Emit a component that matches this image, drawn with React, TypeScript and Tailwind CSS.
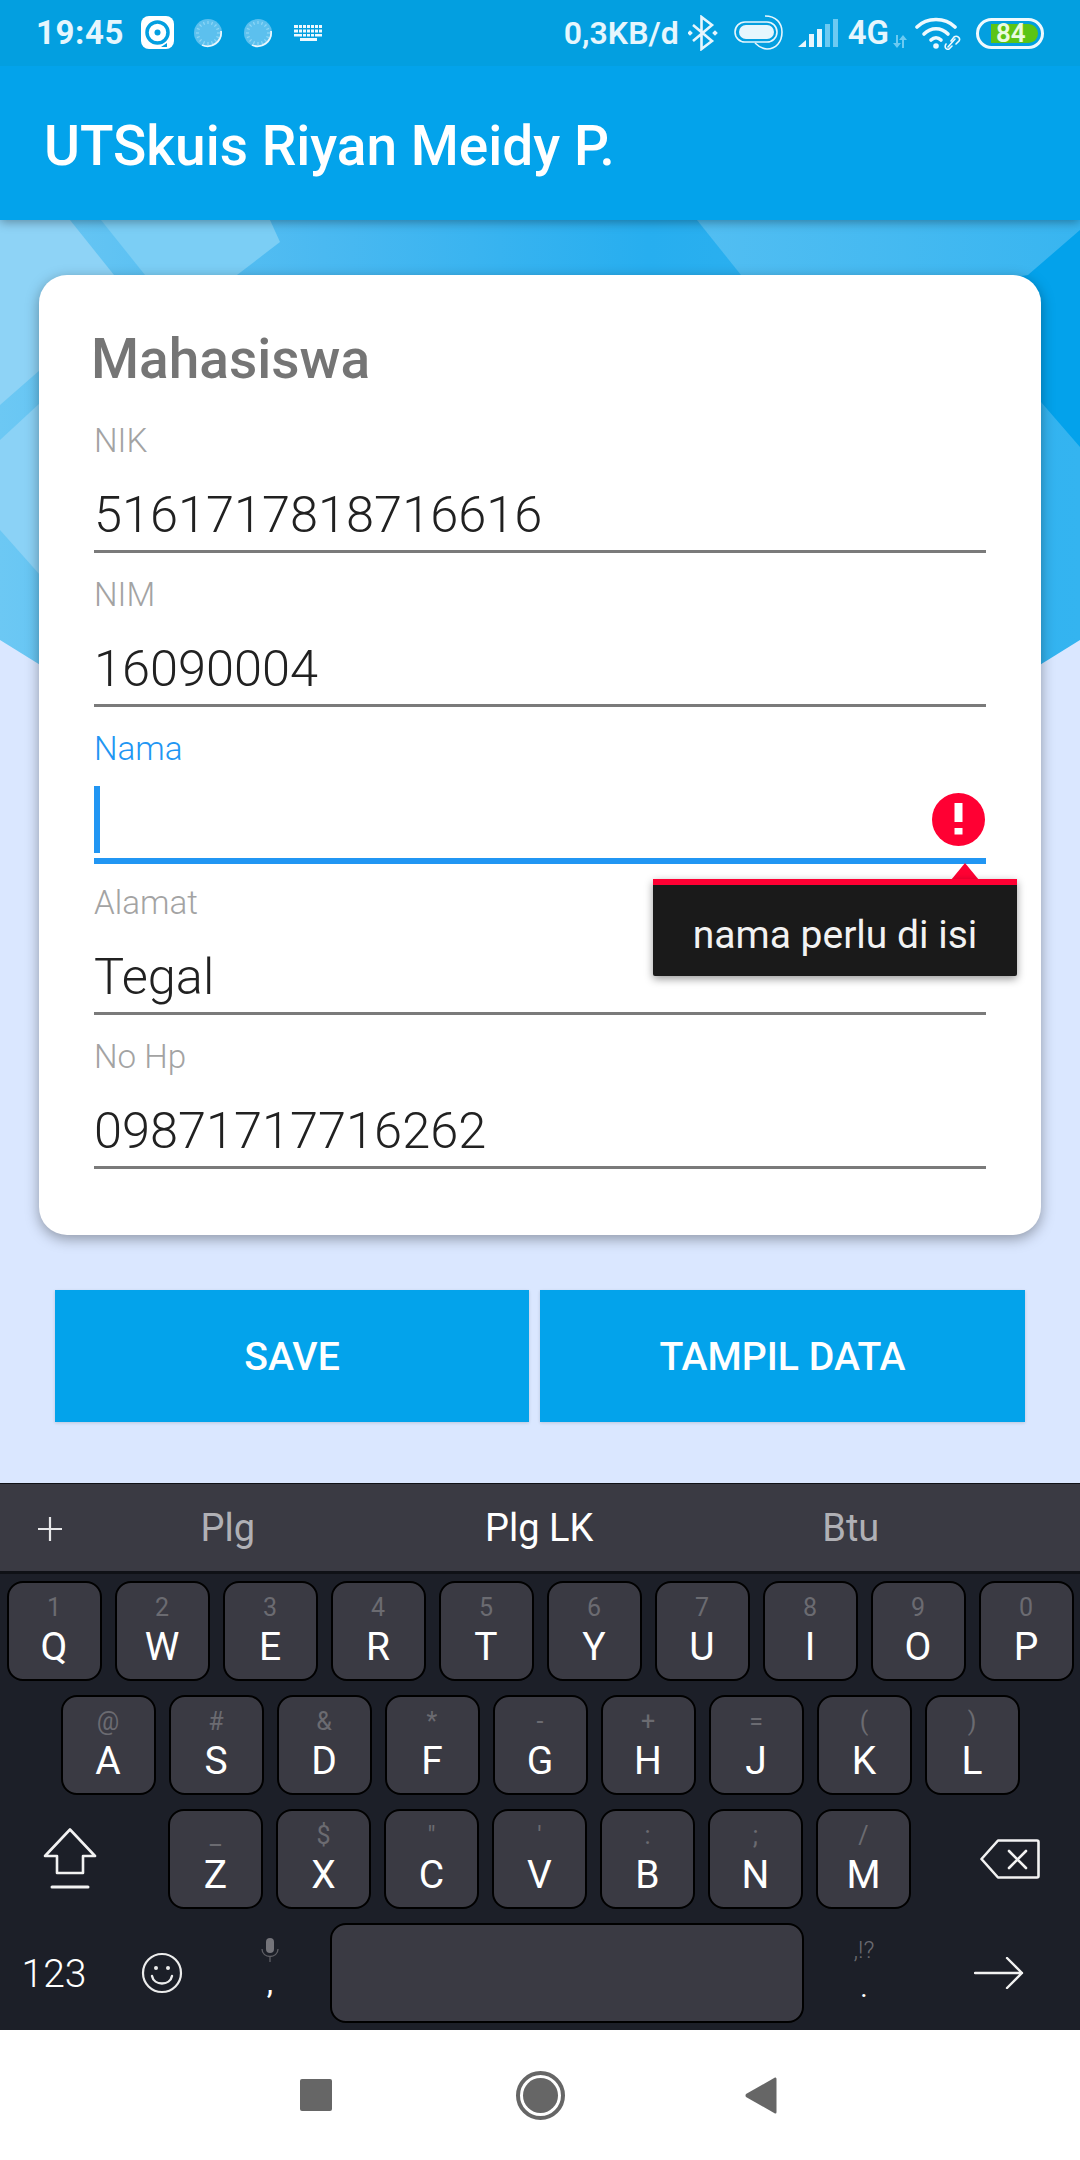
import React from "react";

const rowA = [["Q","1"],["W","2"],["E","3"],["R","4"],["T","5"],["Y","6"],["U","7"],["I","8"],["O","9"],["P","0"]];
const rowB = [["A","@"],["S","#"],["D","&"],["F","*"],["G","-"],["H","+"],["J","="],["K","("],["L",")"]];
const rowC = [["Z","_"],["X","$"],["C","\""],["V","'"],["B",":"],["N",";"],["M","/"]];

function Key({ l, h }: { l: string; h: string }) {
  return (
    <div className="w-[95px] h-[100px] box-border rounded-[16px] border-2 border-[#000000] bg-[#3a3a43] flex flex-col items-center pt-[10px]">
      <div className="h-[30px] leading-[30px] text-[25px] text-[#6b6b71]">{h}</div>
      <div className="mt-[4px] h-[40px] leading-[40px] text-[39px] text-white">{l}</div>
    </div>
  );
}

function Field({ label, value }: { label: string; value: string }) {
  return (
    <div className="h-[154px]">
      <div className="pt-[21px] pb-[21px] text-[33.2px] leading-[42px] font-light text-[#a3a3a3]">{label}</div>
      <div className="h-[67px] text-[50.5px] leading-[63px] font-light text-[#212121]">{value}</div>
      <div className="h-[3px] bg-[#7a7a7a]" />
    </div>
  );
}

function Ring({ id }: { id: string }) {
  const ticks = Array.from({ length: 16 }, (_, i) => i * 22.5);
  return (
    <svg width="30" height="30" viewBox="0 0 30 30" aria-label={id}>
      <circle cx="15" cy="15" r="14" fill="#5cc0ee" />
      {ticks.map((a) => (
        <line key={a} x1="15" y1="3" x2="15" y2="6" stroke="#8fd6f5" strokeWidth="1.2" transform={`rotate(${a} 15 15)`} />
      ))}
      <path d="M28 13 A13.5 13.5 0 0 1 9 27" fill="none" stroke="#eaf7fd" strokeWidth="1.8" />
    </svg>
  );
}

export default function App() {
  return (
    <div className="w-[1080px] h-[2160px] overflow-hidden flex flex-col bg-white font-['Roboto',sans-serif]">
      {/* status bar */}
      <div className="h-[66px] shrink-0 bg-[#039fe0] flex items-center justify-between pl-[36px] pr-[36px] text-[#e6f6fd] relative z-20">
        <div className="flex items-center">
          <span className="text-[33px] font-bold tracking-[0.6px] leading-[40px] w-[87px]">19:45</span>
          <svg className="ml-[18px]" width="33" height="34" viewBox="0 0 33 34">
            <rect x="0" y="0" width="33" height="33" rx="8" fill="#ffffff" />
            <circle cx="16.5" cy="16.5" r="10.5" fill="#ffffff" stroke="#039fe0" strokeWidth="3.5" />
            <circle cx="16.5" cy="16.5" r="3" fill="#039fe0" />
            <path d="M20 31 L26 27 L26 31 Z" fill="#039fe0" />
          </svg>
          <div className="ml-[19px] flex"><Ring id="a" /></div>
          <div className="ml-[20px] flex"><Ring id="b" /></div>
          <svg className="ml-[21px]" width="29" height="16" viewBox="0 0 29 16" fill="#eef9fe">
            <rect x="0" y="0" width="28" height="3" />
            <rect x="0" y="4.5" width="28" height="3" />
            <rect x="0" y="9" width="28" height="2.5" />
            <rect x="6" y="13" width="17" height="3" />
            <path d="M4 0h1v8H4zM8 0h1v12H8zM12 0h1v12h-1zM16 0h1v12h-1zM20 0h1v12h-1zM24 0h1v8h-1z" fill="#039fe0" />
          </svg>
        </div>
        <div className="flex items-center">
          <span className="text-[32px] font-semibold leading-[40px]">0,3KB/d</span>
          <svg className="ml-[9px]" width="30" height="36" viewBox="0 0 30 36" fill="none" stroke="#e6f6fd" strokeWidth="2.6">
            <path d="M5 10 L24 26 L13.5 34 V2 L24 10 L5 26" />
            <rect x="0" y="16" width="4" height="4" transform="rotate(45 2 18)" fill="#e6f6fd" stroke="none" />
            <rect x="25" y="16" width="4" height="4" transform="rotate(45 27 18)" fill="#e6f6fd" stroke="none" />
          </svg>
          <svg className="ml-[16px]" width="50" height="36" viewBox="0 0 50 36" fill="none">
            <rect x="1" y="7" width="42" height="20" rx="10" stroke="#e6f6fd" strokeWidth="1.6" />
            <rect x="5" y="10" width="35" height="14" rx="7" fill="#e6f6fd" />
            <path d="M31 1 C 42 1 48 8 48 17 C 48 27 42 34 33 34 C 28 34 24 31 21 28" stroke="#e6f6fd" strokeWidth="1.6" />
          </svg>
          <svg className="ml-[14px]" width="41" height="30" viewBox="0 0 41 30">
            <path d="M0 29 L8 22 V29 Z" fill="#e6f6fd" />
            <rect x="11" y="16" width="5" height="13" fill="#e6f6fd" />
            <rect x="19" y="11" width="5" height="18" fill="#e6f6fd" />
            <rect x="27" y="6" width="5" height="23" fill="#6ccaf2" />
            <rect x="35" y="1" width="5" height="28" fill="#6ccaf2" />
          </svg>
          <span className="ml-[9px] text-[33px] font-semibold leading-[40px]">4G</span>
          <svg className="ml-[4px] mt-[18px]" width="14" height="14" viewBox="0 0 14 14" fill="#6ccaf2">
            <path d="M3 0h2v8h3l-4 5-4-5h3zM9 13h2V5h3l-4-5-4 5h3z" />
          </svg>
          <svg className="ml-[8px]" width="47" height="34" viewBox="0 0 47 34" fill="none" stroke="#eef9fe" strokeLinecap="round">
            <path d="M2 11 C 12 1 30 1 40 11" strokeWidth="3.6" />
            <path d="M9 18 C 16 11 26 11 33 18" strokeWidth="3.6" />
            <path d="M16 24 C 19 21 23 21 26 24" strokeWidth="3.6" />
            <circle cx="21" cy="30" r="2.8" fill="#eef9fe" stroke="none" />
            <path d="M33 31 L40 23 M31 28 C 29 31 31 34 34 33 L37 30 M36 25 L39 21 C 42 19 46 22 44 25 L41 28" strokeWidth="1.6" />
          </svg>
          <div className="ml-[14px] w-[68px] h-[31px] box-border rounded-full border-[3px] border-[#eef9fe] flex items-center pl-[12px]">
            <div className="w-[47px] h-[19px] rounded-r-full bg-[#5cc414] text-[#eafbe0] text-[26px] font-semibold leading-[19px] pl-[5px]">84</div>
          </div>
        </div>
      </div>

      {/* app bar */}
      <div className="h-[154px] shrink-0 bg-[#03a3eb] flex items-center pl-[44px] pt-[5px] relative z-10 shadow-[0_2px_10px_rgba(0,0,0,0.35)]">
        <span className="text-[55px] font-medium text-white leading-[64px]">UTSkuis Riyan Meidy P.</span>
      </div>

      {/* content */}
      <div className="flex-1 relative bg-[#dae7ff]">
        <svg className="absolute left-0 top-0" width="1080" height="760" viewBox="0 0 1080 760">
          <defs>
            <linearGradient id="base" x1="0" y1="0" x2="1" y2="0">
              <stop offset="0" stopColor="#6cc8f4" />
              <stop offset="0.3" stopColor="#4ab9f1" />
              <stop offset="0.6" stopColor="#27aeef" />
              <stop offset="1" stopColor="#34b4f0" />
            </linearGradient>
            <linearGradient id="rlight" x1="0" y1="0" x2="1" y2="0">
              <stop offset="0" stopColor="#52bef2" />
              <stop offset="1" stopColor="#38b5f0" />
            </linearGradient>
          </defs>
          <polygon points="0,0 1080,0 1080,420 540,755 0,420" fill="url(#base)" />
          <polygon points="0,0 70,0 114,55 40,150 0,185" fill="#8ed3f6" />
          <polygon points="0,220 40,183 40,355 0,310" fill="#8bd2f6" />
          <polygon points="101,0 270,0 280,22 237,55 145,55" fill="#7bcef5" />
          <polygon points="697,0 1080,0 1080,10 1028,55 741,55" fill="url(#rlight)" />
          <polygon points="1080,10 1028,55 1000,60 1041,182 1080,227" fill="#03a2eb" />
        </svg>

        <div className="relative ml-[39px] mt-[55px] w-[1002px] h-[960px] bg-white rounded-[28px] shadow-[0_4px_14px_rgba(0,0,0,0.35)] pl-[55px] pr-[55px]">
          <div className="h-[124px] pt-[54px] text-[55px] leading-[60px] font-medium text-[#757575] -ml-[3px]">Mahasiswa</div>
          <Field label="NIK" value="5161717818716616" />
          <Field label="NIM" value="16090004" />
          <div className="h-[154px] relative">
            <div className="pt-[21px] pb-[21px] text-[33.2px] leading-[42px] font-light text-[#2196f3]">Nama</div>
            <div className="h-[67px] flex justify-between items-start">
              <div className="-mt-[5px] w-[6px] h-[67px] bg-[#2196f3]" />
              <svg className="mt-[2px] mr-[1px]" width="53" height="53" viewBox="0 0 53 53">
                <circle cx="26.5" cy="26.5" r="26.5" fill="#ff0033" />
                <rect x="22.5" y="10" width="8" height="19" fill="#ffffff" />
                <rect x="22.5" y="35" width="8" height="6.5" fill="#ffffff" />
              </svg>
            </div>
            <div className="h-[6px] bg-[#2196f3]" />
            <svg className="absolute left-[857px] top-[156px]" width="28" height="17" viewBox="0 0 28 17">
              <polygon points="14,0 28,17 0,17" fill="#ff0033" />
            </svg>
            <div className="absolute left-[559px] top-[172px] w-[364px] h-[97px] box-border border-t-[6px] border-[#ff0033] bg-[#1a1a1a] rounded-b-[2px] shadow-[0_3px_8px_rgba(0,0,0,0.4)] flex items-center justify-center pt-[8px] text-[39px] leading-[50px] text-[#f2f2f2]">
              nama perlu di isi
            </div>
          </div>
          <Field label="Alamat" value="Tegal" />
          <Field label="No Hp" value="09871717716262" />
        </div>

        <div className="relative mt-[55px] pl-[55px] flex gap-[11px]">
          <div className="w-[474px] h-[132px] pt-[2px] bg-[#03a3eb] shadow-[0_1px_3px_rgba(0,0,0,0.15)] flex items-center justify-center text-[39.2px] font-medium text-white">SAVE</div>
          <div className="w-[485px] h-[132px] pt-[2px] bg-[#03a3eb] shadow-[0_1px_3px_rgba(0,0,0,0.15)] flex items-center justify-center text-[39.2px] font-medium text-white">TAMPIL DATA</div>
        </div>
      </div>

      {/* keyboard */}
      <div className="h-[547px] shrink-0 bg-[#1c1f28] flex flex-col">
        <div className="h-[91px] box-border border-t-[1px] border-b-[3px] border-t-[#101116] border-b-[#0f1116] bg-[#3a3a43] flex items-center pt-[2px] text-[38px]">
          <div className="w-[72px] pl-[28px] flex justify-center">
            <svg width="24" height="24" viewBox="0 0 24 24" stroke="#e8e8ea" strokeWidth="2.2"><path d="M12 0V24M0 12H24" /></svg>
          </div>
          <div className="w-[311.5px] text-center text-[#b0b0b5]">Plg</div>
          <div className="w-[311.5px] text-center text-white">Plg LK</div>
          <div className="w-[311.5px] text-center text-[#b0b0b5]">Btu</div>
        </div>
        <div className="pt-[7px] flex flex-col gap-[14px]">
          <div className="flex justify-center gap-[13px]">
            {rowA.map(([l, h]) => <Key key={l} l={l} h={h} />)}
          </div>
          <div className="flex justify-center gap-[13px]">
            {rowB.map(([l, h]) => <Key key={l} l={l} h={h} />)}
          </div>
          <div className="flex items-center">
            <div className="w-[140px] flex justify-center">
              <svg width="54" height="62" viewBox="0 0 54 62" fill="none" stroke="#f2f2f2" strokeWidth="2.6" strokeLinejoin="round" strokeLinecap="round">
                <path d="M27 1.5 L52 28 H40 V45 H14 V28 H2 Z" />
                <path d="M9 59 H45" strokeWidth="3" />
              </svg>
            </div>
            <div className="ml-[28px] flex gap-[13px]">
              {rowC.map(([l, h]) => <Key key={l} l={l} h={h} />)}
            </div>
            <div className="flex-1 pl-[29px] flex justify-center">
              <svg width="60" height="40" viewBox="0 0 60 40" fill="none" stroke="#f2f2f2" strokeWidth="2.6" strokeLinejoin="round" strokeLinecap="round">
                <path d="M18 1.5 H57 Q58.5 1.5 58.5 3 V37 Q58.5 38.5 57 38.5 H18 L1.5 20 Z" />
                <path d="M29 12 L46 29 M46 12 L29 29" />
              </svg>
            </div>
          </div>
          <div className="flex items-center">
            <div className="w-[108px] pt-[1px] text-center text-[39px] font-light leading-[50px] text-white">123</div>
            <div className="w-[108px] flex justify-center">
              <svg width="42" height="42" viewBox="0 0 42 42" fill="none" stroke="#ececec" strokeWidth="2.2" strokeLinecap="round">
                <circle cx="21" cy="21" r="19" />
                <circle cx="15" cy="16" r="2" fill="#ececec" stroke="none" />
                <circle cx="27" cy="16" r="2" fill="#ececec" stroke="none" />
                <path d="M11 24 C 13 34 29 34 31 24" strokeWidth="2.4" />
              </svg>
            </div>
            <div className="w-[108px] h-[100px] flex flex-col items-center pt-[15px]">
              <svg width="18" height="24" viewBox="0 0 18 24" fill="none">
                <rect x="5" y="0" width="8" height="15" rx="4" fill="#74747a" />
                <path d="M1 11 C 1 21 17 21 17 11 M9 18 V24" stroke="#5f5f65" strokeWidth="1.3" />
              </svg>
              <div className="mt-[4px] text-[32px] leading-[32px] text-white">,</div>
            </div>
            <div className="ml-[6px] w-[474px] h-[100px] box-border rounded-[16px] border-2 border-[#000000] bg-[#3a3a43]" />
            <div className="ml-[6px] w-[108px] h-[100px] flex flex-col items-center pt-[12px]">
              <div className="text-[24px] leading-[30px] font-light text-[#6b6b71]">,!?</div>
              <div className="mt-[8px] text-[28px] leading-[30px] text-white">.</div>
            </div>
            <div className="flex-1 flex justify-center">
              <svg width="50" height="32" viewBox="0 0 50 32" fill="none" stroke="#f2f2f2" strokeWidth="2.4" strokeLinecap="round" strokeLinejoin="round">
                <path d="M1 16 H48 M33 1 L48 16 L33 31" />
              </svg>
            </div>
          </div>
        </div>
      </div>

      {/* nav bar */}
      <div className="h-[130px] shrink-0 bg-white flex items-center pl-[300px]">
        <div className="w-[32px] h-[32px] rounded-[2px] bg-[#666666]" />
        <div className="ml-[184px] w-[49px] h-[49px] box-border rounded-full border-[4px] border-[#666666] p-[3px]">
          <div className="w-full h-full rounded-full bg-[#666666]" />
        </div>
        <svg className="ml-[180px]" width="32" height="37" viewBox="0 0 32 37">
          <path d="M30 0.5 Q31.5 0 31.5 2 V35 Q31.5 37 30 36.5 L1 20 Q0 18.5 1 17 Z" fill="#666666" />
        </svg>
      </div>
    </div>
  );
}
